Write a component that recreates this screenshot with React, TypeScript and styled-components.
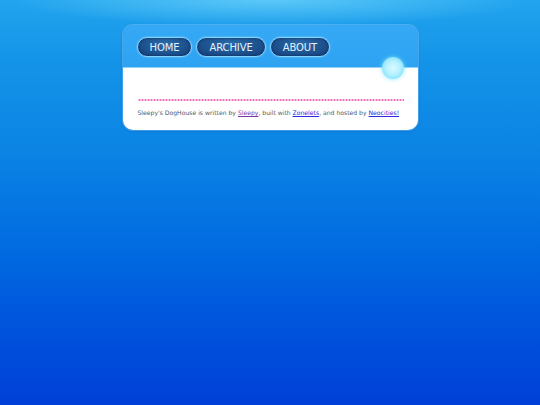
import * as React from 'react';
import styled, { createGlobalStyle } from 'styled-components';

const GlobalStyle = createGlobalStyle`
  html, body {
    margin: 0;
    padding: 0;
    height: 100%;
  }
  body {
    min-height: 405px;
    font-family: "DejaVu Sans", Verdana, sans-serif;
    background:
      radial-gradient(ellipse 260px 26px at 270px 0px, rgba(130, 225, 255, 0.6), rgba(130, 225, 255, 0) 100%),
      linear-gradient(180deg, #22a4ee 0px, #1494e8 60px, #0a82e4 160px, #0068e0 260px, #0052dc 330px, #0040d8 405px);
    background-repeat: no-repeat;
    background-color: #0040d8;
  }
`;

const Card = styled.div`
  position: relative;
  width: 295px;
  margin: 25px auto 0;
  border-radius: 10px;
  box-shadow: 0 0 0 1px rgba(160, 215, 255, 0.35), 0 1px 3px rgba(0, 40, 120, 0.25);
`;

const Header = styled.div`
  display: flex;
  gap: 4px;
  height: 43px;
  box-sizing: border-box;
  padding: 12px 14px 0;
  background: linear-gradient(180deg, #35a9f5 0%, #2ea3f2 100%);
  border-radius: 10px 10px 0 0;
  border-bottom: 1px solid #8fd2fb;
`;

const NavButton = styled.a`
  display: flex;
  align-items: center;
  justify-content: center;
  height: 20px;
  box-sizing: border-box;
  padding: 0 12px;
  border-radius: 10px;
  border: 1px solid #86d2ff;
  background: radial-gradient(ellipse at 50% 30%, #2a6aa8 0%, #1d5490 55%, #173f78 100%);
  box-shadow: inset 0 0 3px rgba(0, 20, 60, 0.6), 0 0 2px rgba(180, 235, 255, 0.6);
  color: #e6f3ff;
  font-family: "DejaVu Sans", Tahoma, sans-serif;
  font-size: 10px;
  letter-spacing: -0.1px;
  text-decoration: none;
`;

const Orb = styled.div`
  position: absolute;
  right: 14px;
  top: 32px;
  width: 22px;
  height: 22px;
  border-radius: 50%;
  background: radial-gradient(circle at 50% 50%, #d8fbff 0%, #b6f1ff 45%, #7fe0fb 80%, #5dcdf4 100%);
  box-shadow: 0 0 4px rgba(120, 230, 255, 0.9);
`;

const Body = styled.div`
  background: #ffffff;
  border-radius: 0 0 10px 10px;
  padding: 31px 14px 9px 15px;
  height: 62px;
  box-sizing: border-box;
`;

const Divider = styled.div`
  height: 2px;
  background-image: radial-gradient(circle, #f46cb4 1px, transparent 1.2px);
  background-size: 3px 2px;
  background-repeat: repeat-x;
  margin-bottom: 8px;
`;

const Footer = styled.p`
  margin: 0;
  font-size: 6.1px;
  color: #555a66;
  white-space: nowrap;
`;

const FooterLink = styled.a<{ $visited?: boolean }>`
  color: ${(p) => (p.$visited ? '#7a3aa6' : '#2a2ae0')};
  text-decoration: underline;
`;

const App = () => {
  return (
    <>
      <GlobalStyle />
      <Card>
        <Header>
          <NavButton href="#">HOME</NavButton>
          <NavButton href="#">ARCHIVE</NavButton>
          <NavButton href="#">ABOUT</NavButton>
        </Header>
        <Orb />
        <Body>
          <Divider />
          <Footer>
            Sleepy's DogHouse is written by <FooterLink href="#" $visited>Sleepy</FooterLink>, built with{' '}
            <FooterLink href="#">Zonelets</FooterLink>, and hosted by <FooterLink href="#">Neocities!</FooterLink>
          </Footer>
        </Body>
      </Card>
    </>
  );
};

export default App;
